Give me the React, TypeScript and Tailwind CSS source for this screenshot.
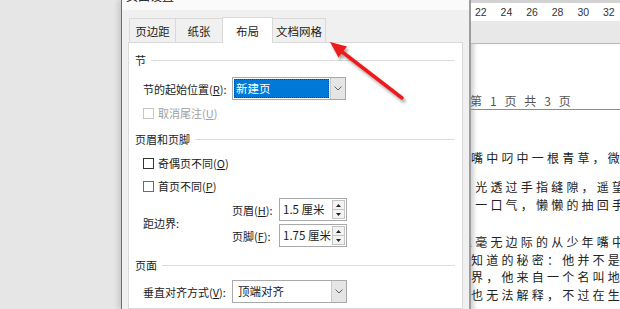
import React from "react";

const U = ({ c }: { c: string }) => <span className="underline underline-offset-[1px]">{c}</span>;

function Section({ title }: { title: string }) {
  return (
    <div className="flex items-center h-[16px] mr-[7px]">
      <span className="leading-[16px]">{title}</span>
      <div className="ml-[5px] flex-1 h-px bg-[#dcdcdc]" />
    </div>
  );
}

function Chevron() {
  return (
    <svg width="8" height="5" viewBox="0 0 8 5" className="block">
      <path d="M0.5 0.5 L4 4 L7.5 0.5" fill="none" stroke="#606060" strokeWidth="1" />
    </svg>
  );
}

function Combo({ text, selected, width }: { text: string; selected?: boolean; width: number }) {
  return (
    <div className="flex h-[23px] border border-[#a9a9a9] bg-white" style={{ width }}>
      <div className="flex-1 p-[1px]">
        {selected ? (
          <div className="h-full bg-[#0078d7] text-white leading-[19px] pl-[2px] outline outline-1 outline-dotted outline-[#3a3a3a] -outline-offset-1 text-[11.5px]">
            {text}
          </div>
        ) : (
          <div className="h-full leading-[19px] pl-[4px] text-[11.5px]">{text}</div>
        )}
      </div>
      <div className="w-[15px] bg-[#e5e5e5] border-l border-[#c8c8c8] flex items-center justify-center">
        <Chevron />
      </div>
    </div>
  );
}

function Spinner({ text }: { text: string }) {
  return (
    <div className="flex h-[23px] w-[68px] border border-[#a9a9a9] bg-white">
      <div className="flex-1 min-w-0 whitespace-nowrap leading-[21px] pl-[3px] text-[11.5px]">{text}</div>
      <div className="w-[14px] shrink-0 flex flex-col py-[1px] pr-[1px]">
        <div className="flex-1 bg-[#f3f3f3] border border-[#c4c4c4] flex items-center justify-center">
          <svg width="5" height="3" viewBox="0 0 5 3"><path d="M0 3 L2.5 0 L5 3 Z" fill="#222" /></svg>
        </div>
        <div className="flex-1 bg-[#f3f3f3] border border-t-0 border-[#c4c4c4] flex items-center justify-center">
          <svg width="5" height="3" viewBox="0 0 5 3"><path d="M0 0 L2.5 3 L5 0 Z" fill="#222" /></svg>
        </div>
      </div>
    </div>
  );
}

function Check({ children, tone }: { children: React.ReactNode; tone: "dark" | "blue" | "off" }) {
  const box =
    tone === "dark" ? "border-[#333333]" : tone === "blue" ? "border-[#1a7fd8]" : "border-[#c6c6c6]";
  return (
    <div className={`flex items-center h-[16px] pl-[8px] ${tone === "off" ? "text-[#a0a0a0]" : ""}`}>
      <div className={`w-[11px] h-[11px] border bg-white ${box}`} />
      <span className="ml-[4px] leading-[16px]">{children}</span>
    </div>
  );
}

function Tab({ label, w, active }: { label: string; w: number; active?: boolean }) {
  return (
    <div
      className={
        active
          ? "relative z-10 -mb-px h-[26px] bg-white border border-b-0 border-[#d9d9d9] flex items-center justify-center -ml-px"
          : "h-[24px] bg-[#f0f0f0] border border-b-0 border-[#d9d9d9] flex items-center justify-center -ml-px first:ml-0"
      }
      style={{ width: w }}
    >
      <span className="leading-[14px] text-[11.5px]">{label}</span>
    </div>
  );
}

function Dialog() {
  return (
    <div className="w-[348px] shrink-0 h-full flex flex-col border-l border-[#6e6e6e] bg-[#f0f0f0] shadow-[-3px_0_5px_rgba(0,0,0,0.12)]">
      <div className="h-[10px] overflow-hidden bg-[#fafafa]">
        <div className="-mt-[11px] pl-[4px] text-[12px] leading-[14px] text-[#111]">页面设置</div>
      </div>
      <div className="mt-[7px] h-[25px] flex items-end pl-[7px]">
        <Tab label="页边距" w={47} />
        <Tab label="纸张" w={48} />
        <Tab label="布局" w={51} active />
        <Tab label="文档网格" w={54} />
      </div>
      <div className="ml-[6px] w-[335px] flex-1 border border-[#d9d9d9] bg-white pl-[6px] pt-[9px] flex flex-col">
        <Section title="节" />
        <div className="mt-[9px] flex items-center pl-[8px]">
          <span className="w-[89px] leading-[16px]">
            节的起始位置(<U c="R" />):
          </span>
          <Combo text="新建页" selected width={114} />
        </div>
        <div className="mt-[5px]">
          <Check tone="off">
            取消尾注(<U c="U" />)
          </Check>
        </div>
        <div className="mt-[10px]">
          <Section title="页眉和页脚" />
        </div>
        <div className="mt-[8px]">
          <Check tone="dark">
            奇偶页不同(<U c="O" />)
          </Check>
        </div>
        <div className="mt-[7px]">
          <Check tone="blue">
            首页不同(<U c="P" />)
          </Check>
        </div>
        <div className="mt-[4px] flex items-center pl-[8px]">
          <span className="w-[89px] leading-[16px]">距边界:</span>
          <div className="flex flex-col gap-[3px]">
            <div className="flex items-center">
              <span className="w-[47px] leading-[16px]">
                页眉(<U c="H" />):
              </span>
              <Spinner text="1.5 厘米" />
            </div>
            <div className="flex items-center">
              <span className="w-[47px] leading-[16px]">
                页脚(<U c="F" />):
              </span>
              <Spinner text="1.75 厘米" />
            </div>
          </div>
        </div>
        <div className="mt-[10px]">
          <Section title="页面" />
        </div>
        <div className="mt-[7px] flex items-center pl-[8px]">
          <span className="w-[89px] leading-[16px]">
            垂直对齐方式(<U c="V" />):
          </span>
          <Combo text="顶端对齐" width={115} />
        </div>
      </div>
    </div>
  );
}

function Document() {
  const nums = ["22", "24", "26", "28", "30", "32"];
  return (
    <div className="flex-1 min-w-0 h-full flex flex-col border-l-2 border-[#9d9d9d] bg-white overflow-hidden">
      <div className="h-[3px] bg-[#d2d2d2]" />
      <div className="h-[18px] flex items-center pl-[4px] font-['Liberation_Sans',sans-serif] text-[10.5px] text-[#333]">
        {nums.map((n) => (
          <span key={n} className="w-[25.6px] shrink-0 leading-[12px]">
            {n}
          </span>
        ))}
      </div>
      <div className="h-[23px] bg-[#e8e8e8] border-b border-[#b8b8b8]" />
      <div className="flex-1 pt-[48px] shadow-[inset_5px_0_4px_-2px_rgba(0,0,0,0.18)] text-[12px] whitespace-nowrap">
        <div className="leading-[17px] tracking-[2.6px] text-[#555] border-b border-[#8c8c8c] -ml-px">第 1 页 共 3 页</div>
        <div className="tracking-[3.2px] leading-[17.5px] text-[#222]">
          <div className="mt-[39px]">嘴中叼中一根青草，微</div>
          <div className="mt-[11.5px] -ml-[11px]">月光透过手指缝隙，遥望</div>
          <div className="-ml-[11px]">了一口气，懒懒的抽回手</div>
          <div className="mt-[20px] -ml-[11px]">丝毫无边际的从少年嘴中</div>
          <div>知道的秘密：他并不是</div>
          <div>界，他来自一个名叫地</div>
          <div>也无法解释，不过在生</div>
        </div>
      </div>
    </div>
  );
}

function Arrow() {
  return (
    <svg className="absolute left-0 top-0 pointer-events-none" width="620" height="309" viewBox="0 0 620 309">
      <defs>
        <filter id="sh" x="-20%" y="-20%" width="140%" height="140%">
          <feDropShadow dx="2" dy="3" stdDeviation="1.8" floodColor="#000" floodOpacity="0.35" />
        </filter>
      </defs>
      <g filter="url(#sh)">
        <line x1="402" y1="98" x2="341" y2="51" stroke="#ec1c1c" strokeWidth="3.5" strokeLinecap="round" />
        <path d="M330 42 L347 46.5 L338.5 57.5 Z" fill="#ec1c1c" />
      </g>
    </svg>
  );
}

export default function App() {
  return (
    <div className="relative flex w-[620px] h-[309px] overflow-hidden bg-[#e6e6e6] font-['Noto_Sans_CJK_SC',sans-serif] text-[11px] text-[#1b1b1b]">
      <div className="w-[121px] shrink-0 h-full bg-[#e6e6e6]" />
      <Dialog />
      <Document />
      <Arrow />
    </div>
  );
}
